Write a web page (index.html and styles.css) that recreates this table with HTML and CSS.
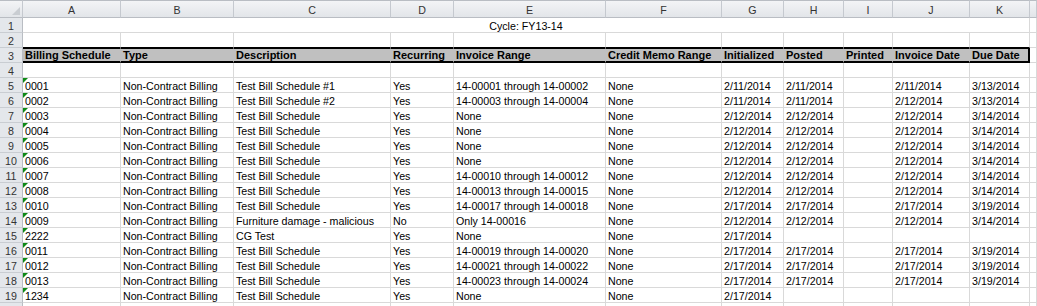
FILE: index.html
```html
<!DOCTYPE html>
<html>
<head>
<meta charset="utf-8">
<title>Billing Schedules</title>
<link rel="stylesheet" href="styles.css">
</head>
<body>
<div class="sheet">
  <div class="corner"></div><div class="ch">A</div><div class="ch">B</div><div class="ch">C</div><div class="ch">D</div><div class="ch">E</div><div class="ch">F</div><div class="ch">G</div><div class="ch">H</div><div class="ch">I</div><div class="ch">J</div><div class="ch">K</div><div class="ch"></div>

  <div class="rh">1</div><div class="merged">Cycle: FY13-14</div><div></div>

  <div class="rh">2</div><div class="r2"></div><div class="r2"></div><div class="r2"></div><div class="r2"></div><div class="r2"></div><div class="r2"></div><div class="r2"></div><div class="r2"></div><div class="r2"></div><div class="r2"></div><div class="r2"></div><div></div>

  <div class="rh">3</div><div class="hd">Billing Schedule</div><div class="hd">Type</div><div class="hd">Description</div><div class="hd">Recurring</div><div class="hd">Invoice Range</div><div class="hd">Credit Memo Range</div><div class="hd">Initialized</div><div class="hd">Posted</div><div class="hd">Printed</div><div class="hd">Invoice Date</div><div class="hd hd-last">Due Date</div><div></div>

  <div class="rh">4</div><div></div><div></div><div></div><div></div><div></div><div></div><div></div><div></div><div></div><div></div><div></div><div></div>

  <div class="rh">5</div><div class="txt">0001</div><div>Non-Contract Billing</div><div>Test Bill Schedule #1</div><div>Yes</div><div>14-00001 through 14-00002</div><div>None</div><div>2/11/2014</div><div>2/11/2014</div><div></div><div>2/11/2014</div><div>3/13/2014</div><div></div>

  <div class="rh">6</div><div class="txt">0002</div><div>Non-Contract Billing</div><div>Test Bill Schedule #2</div><div>Yes</div><div>14-00003 through 14-00004</div><div>None</div><div>2/11/2014</div><div>2/11/2014</div><div></div><div>2/12/2014</div><div>3/13/2014</div><div></div>

  <div class="rh">7</div><div class="txt">0003</div><div>Non-Contract Billing</div><div>Test Bill Schedule</div><div>Yes</div><div>None</div><div>None</div><div>2/12/2014</div><div>2/12/2014</div><div></div><div>2/12/2014</div><div>3/14/2014</div><div></div>

  <div class="rh">8</div><div class="txt">0004</div><div>Non-Contract Billing</div><div>Test Bill Schedule</div><div>Yes</div><div>None</div><div>None</div><div>2/12/2014</div><div>2/12/2014</div><div></div><div>2/12/2014</div><div>3/14/2014</div><div></div>

  <div class="rh">9</div><div class="txt">0005</div><div>Non-Contract Billing</div><div>Test Bill Schedule</div><div>Yes</div><div>None</div><div>None</div><div>2/12/2014</div><div>2/12/2014</div><div></div><div>2/12/2014</div><div>3/14/2014</div><div></div>

  <div class="rh">10</div><div class="txt">0006</div><div>Non-Contract Billing</div><div>Test Bill Schedule</div><div>Yes</div><div>None</div><div>None</div><div>2/12/2014</div><div>2/12/2014</div><div></div><div>2/12/2014</div><div>3/14/2014</div><div></div>

  <div class="rh">11</div><div class="txt">0007</div><div>Non-Contract Billing</div><div>Test Bill Schedule</div><div>Yes</div><div>14-00010 through 14-00012</div><div>None</div><div>2/12/2014</div><div>2/12/2014</div><div></div><div>2/12/2014</div><div>3/14/2014</div><div></div>

  <div class="rh">12</div><div class="txt">0008</div><div>Non-Contract Billing</div><div>Test Bill Schedule</div><div>Yes</div><div>14-00013 through 14-00015</div><div>None</div><div>2/12/2014</div><div>2/12/2014</div><div></div><div>2/12/2014</div><div>3/14/2014</div><div></div>

  <div class="rh">13</div><div class="txt">0010</div><div>Non-Contract Billing</div><div>Test Bill Schedule</div><div>Yes</div><div>14-00017 through 14-00018</div><div>None</div><div>2/17/2014</div><div>2/17/2014</div><div></div><div>2/17/2014</div><div>3/19/2014</div><div></div>

  <div class="rh">14</div><div class="txt">0009</div><div>Non-Contract Billing</div><div>Furniture damage - malicious</div><div>No</div><div>Only 14-00016</div><div>None</div><div>2/12/2014</div><div>2/12/2014</div><div></div><div>2/12/2014</div><div>3/14/2014</div><div></div>

  <div class="rh">15</div><div class="txt">2222</div><div>Non-Contract Billing</div><div>CG Test</div><div>Yes</div><div>None</div><div>None</div><div>2/17/2014</div><div></div><div></div><div></div><div></div><div></div>

  <div class="rh">16</div><div class="txt">0011</div><div>Non-Contract Billing</div><div>Test Bill Schedule</div><div>Yes</div><div>14-00019 through 14-00020</div><div>None</div><div>2/17/2014</div><div>2/17/2014</div><div></div><div>2/17/2014</div><div>3/19/2014</div><div></div>

  <div class="rh">17</div><div class="txt">0012</div><div>Non-Contract Billing</div><div>Test Bill Schedule</div><div>Yes</div><div>14-00021 through 14-00022</div><div>None</div><div>2/17/2014</div><div>2/17/2014</div><div></div><div>2/17/2014</div><div>3/19/2014</div><div></div>

  <div class="rh">18</div><div class="txt">0013</div><div>Non-Contract Billing</div><div>Test Bill Schedule</div><div>Yes</div><div>14-00023 through 14-00024</div><div>None</div><div>2/17/2014</div><div>2/17/2014</div><div></div><div>2/17/2014</div><div>3/19/2014</div><div></div>

  <div class="rh">19</div><div class="txt">1234</div><div>Non-Contract Billing</div><div>Test Bill Schedule</div><div>Yes</div><div>None</div><div>None</div><div>2/17/2014</div><div></div><div></div><div></div><div></div><div></div>

  <div class="rh"></div><div></div><div></div><div></div><div></div><div></div><div></div><div></div><div></div><div></div><div></div><div></div><div></div>
</div>
</body>
</html>
```
FILE: styles.css
```css
html, body {
  margin: 0;
  padding: 0;
  background: #ffffff;
  overflow: hidden;
}

body {
  font-family: "Liberation Sans", Arial, sans-serif;
  font-size: 10.67px;
  color: #000000;
}

.sheet {
  display: grid;
  grid-template-columns: 23px 98px 113px 157px 63px 152px 116px 62px 60px 49px 77px 60px 1fr;
  grid-template-rows: 18px;
  grid-auto-rows: 15px;
  width: 1037px;
}

.sheet > div {
  box-sizing: border-box;
  position: relative;
  border-right: 1px solid #d9d9d9;
  border-bottom: 1px solid #d9d9d9;
  padding: 1px 0 0 2px;
  line-height: 14px;
  white-space: nowrap;
  overflow: hidden;
}

/* column headers */
.sheet > .ch,
.sheet > .corner {
  background: linear-gradient(#f3f4f6, #e2e5e9);
  border-top: 1px solid #b9bdc3;
  border-right: 1px solid #c5c9cf;
  border-bottom: 1px solid #b9bdc3;
  color: #333333;
  text-align: center;
  padding: 1px 0 0 0;
  line-height: 17px;
  overflow: visible;
}

.sheet > .corner::after {
  content: "";
  position: absolute;
  right: 2px;
  bottom: 2px;
  width: 0;
  height: 0;
  border-left: 8px solid transparent;
  border-bottom: 8px solid #c9cdd2;
}

/* row headers */
.sheet > .rh {
  background: #e4e7eb;
  border-right: 1px solid #b9bdc3;
  border-bottom: 1px solid #c9cdd2;
  color: #333333;
  text-align: center;
  padding: 1px 0 0 0;
}

.sheet > .merged {
  grid-column: span 11;
  text-align: center;
  padding-left: 0;
}

.sheet > .r2 {
  border-bottom: 1px solid #000000;
}

.sheet > .hd {
  background: #c0c0c0;
  border-top: 1px solid #000000;
  border-bottom: 2px solid #000000;
  border-right-color: #c0c0c0;
  font-size: 11px;
  font-weight: bold;
  line-height: 12px;
  padding-top: 0;
}

.sheet > .hd-last {
  border-right: 2px solid #000000;
}

/* number stored as text indicator */
.sheet > .txt::before {
  content: "";
  position: absolute;
  left: 0;
  top: 0;
  width: 0;
  height: 0;
  border-top: 5px solid #0e8a16;
  border-right: 5px solid transparent;
}
```
